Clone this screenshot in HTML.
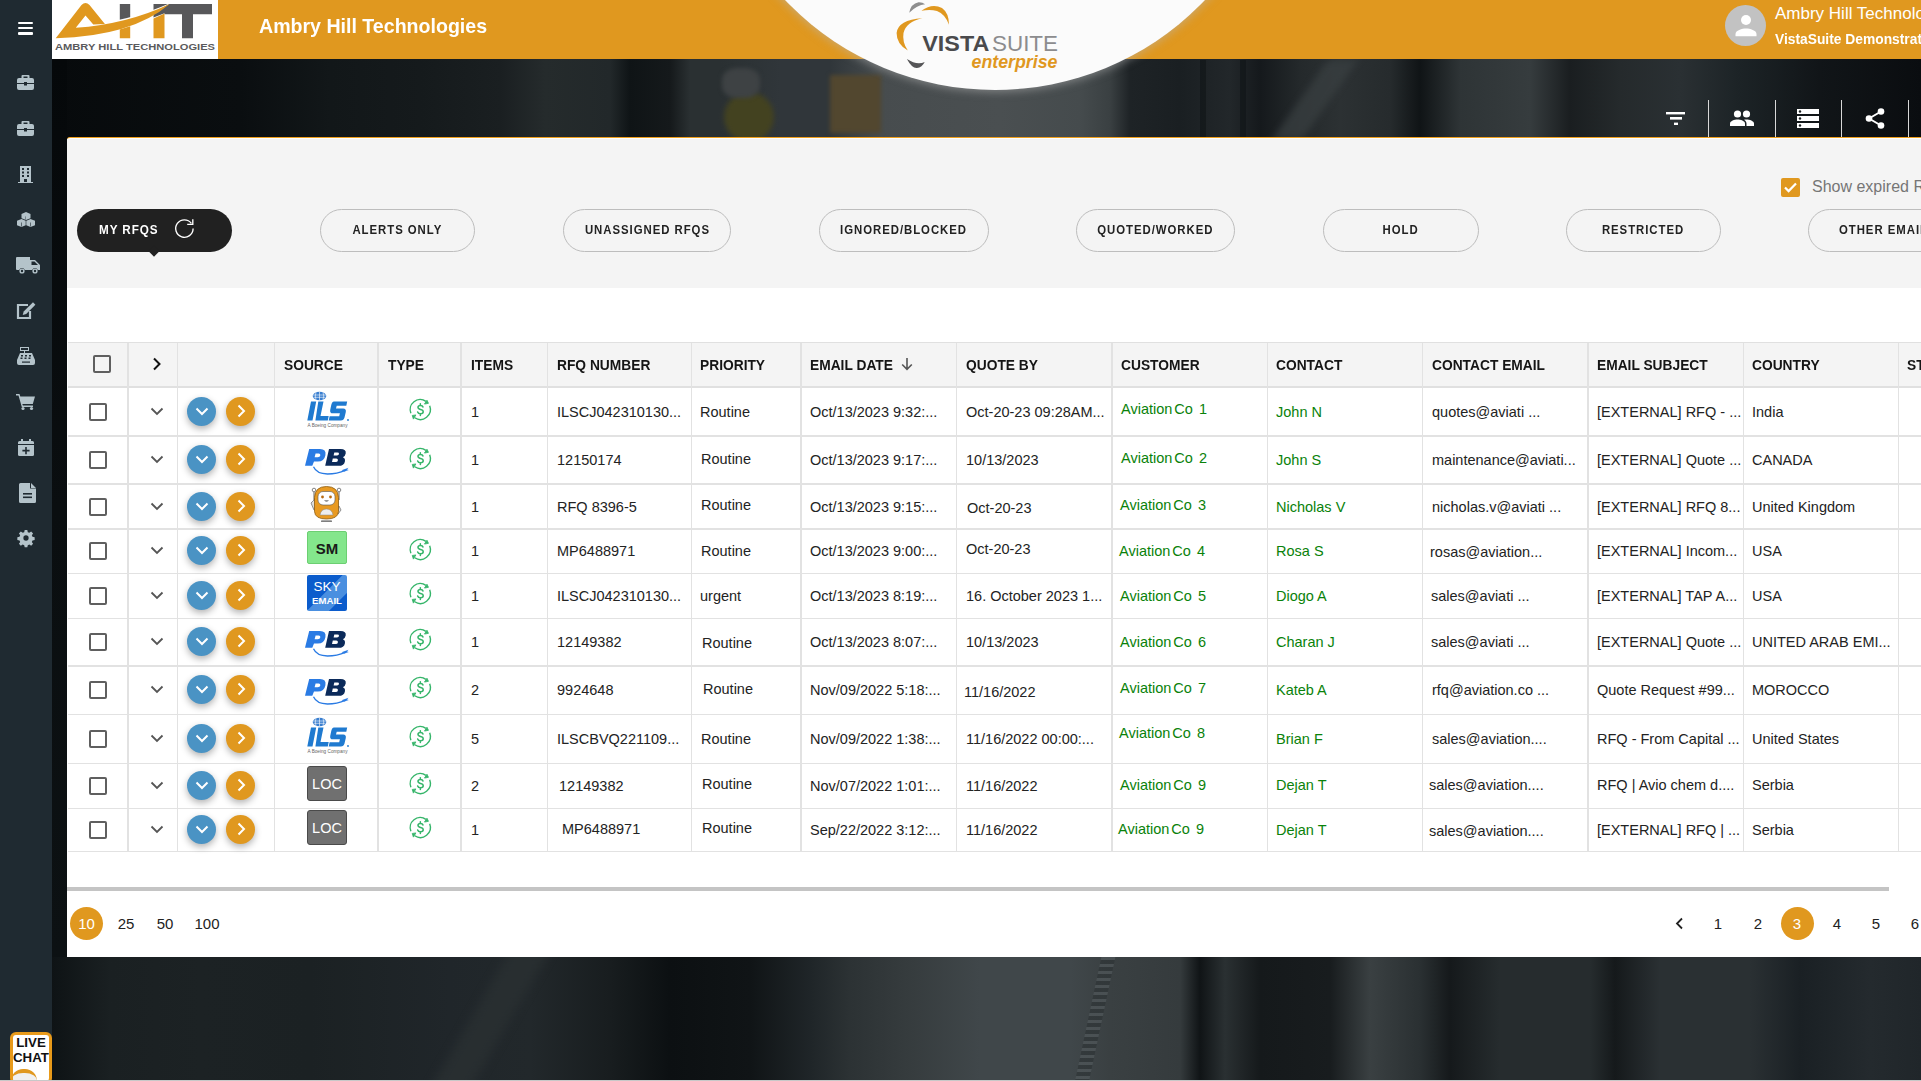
<!DOCTYPE html>
<html><head><meta charset="utf-8"><title>VistaSuite</title>
<style>
*{box-sizing:border-box;margin:0;padding:0}
html,body{width:1921px;height:1081px;overflow:hidden}
body{position:relative;font-family:"Liberation Sans",sans-serif;background:#14191b;color:#212121}
.a{position:absolute}
.t{position:absolute;white-space:nowrap;line-height:1}
svg{position:absolute;overflow:visible}
.ic{fill:#b4c3ca}
.pill{position:absolute;top:209px;height:43px;border:1px solid #bdbdbd;border-radius:22px;font-size:13px;font-weight:bold;letter-spacing:1.1px;color:#222;display:flex;align-items:center;justify-content:center}
.hd{position:absolute;top:357.8px;font-size:14.5px;font-weight:bold;color:#151515;white-space:nowrap;line-height:14px}
.c{position:absolute;font-size:14.5px;color:#232323;white-space:nowrap;line-height:14px}
.g{color:#0a820a}
</style></head>
<body>
<div class="a" style="left:52px;top:0;width:1869px;height:1081px;background:#12181a"></div>
<div class="a" style="left:52px;top:59px;width:1869px;height:80px;background:linear-gradient(90deg,#070a0c 0px,#0a0e10 188px,#121719 278px,#151a1c 368px,#1a1f21 448px,#252b2c 493px,#22282a 558px,#0f1416 578px,#15191b 618px,#2a3032 638px,#2a3032 668px,#30363a 728px,#30363a 778px,#474c4e 828px,#4a4f51 948px,#454b4d 1028px,#3a4042 1058px,#1e2326 1078px,#1a1f22 1128px,#22272a 1178px,#15191c 1208px,#24292b 1248px,#2c3133 1288px,#262b2d 1338px,#101416 1368px,#2e3436 1408px,#363c3e 1478px,#1a1e20 1518px,#252a2c 1568px,#2a3033 1628px,#1c2326 1688px,#111518 1768px,#0a0d10 1869px)"></div>
<div class="a" style="left:724px;top:92px;width:50px;height:50px;border-radius:50%;background:#434220;filter:blur(2.5px);transform:rotate(20deg)"></div>
<div class="a" style="left:722px;top:68px;width:38px;height:30px;border-radius:40%;background:#3e4244;filter:blur(2px)"></div>
<div class="a" style="left:830px;top:75px;width:51px;height:58px;background:#52472f;filter:blur(2px)"></div>
<div class="a" style="left:52px;top:956px;width:1869px;height:125px;background:linear-gradient(90deg,#0e1315 0px,#1a2022 58px,#1c2224 148px,#1b2123 258px,#20262a 398px,#22282b 478px,#181d1f 558px,#0c1012 618px,#101416 698px,#1f2528 758px,#2c3234 798px,#363c3e 858px,#40474a 928px,#40474a 1018px,#3a4042 1058px,#353b3d 1128px,#101416 1148px,#2a3032 1173px,#15191b 1208px,#181c1e 1278px,#3a4042 1318px,#2a3032 1368px,#15191b 1398px,#262c2e 1448px,#262c2e 1538px,#15191b 1563px,#2a3033 1608px,#2a3033 1698px,#1a2024 1748px,#242a2e 1818px,#20262a 1869px)"></div>
<div class="a" style="left:0;top:0;width:1921px;height:1081px;overflow:hidden;pointer-events:none"><div class="a" style="left:470px;top:940px;width:40px;height:160px;background:#2a3032;filter:blur(6px);transform:skewX(-30deg);opacity:.8"></div><div class="a" style="left:1088px;top:950px;width:14px;height:140px;background:repeating-linear-gradient(180deg,#50575a 0 3px,#2e3436 3px 7px);transform:skewX(-12deg);opacity:.7"></div><div class="a" style="left:1300px;top:60px;width:30px;height:80px;background:#3a4042;filter:blur(4px);transform:skewX(-35deg);opacity:.7"></div><div class="a" style="left:1200px;top:60px;width:6px;height:78px;background:#0c1012;opacity:.45"></div><div class="a" style="left:1240px;top:60px;width:6px;height:78px;background:#0c1012;opacity:.45"></div></div>
<div class="a" style="left:52px;top:59px;width:15px;height:898px;background:linear-gradient(180deg,#05080a,#0a0e10 50%,#0c1113)"></div>
<div class="a" style="left:0;top:0;width:52px;height:1081px;background:#1f2a31"></div>
<div class="a" style="left:18px;top:21.8px;width:15px;height:2.4px;background:#fff;border-radius:1px"></div>
<div class="a" style="left:18px;top:26.8px;width:15px;height:2.4px;background:#fff;border-radius:1px"></div>
<div class="a" style="left:18px;top:32.2px;width:15px;height:2.4px;background:#fff;border-radius:1px"></div>
<svg class="ic" style="left:17px;top:75px" width="17" height="15" viewBox="0 0 17 15"><path d="M5.5 0h6a1 1 0 0 1 1 1v2h2.5a2 2 0 0 1 2 2v3H10v-1H7v1H0V5a2 2 0 0 1 2-2h2.5V1a1 1 0 0 1 1-1zM6.5 1.5v1.5h4V1.5z"/><path d="M0 9h7v1.5h3V9h7v4a2 2 0 0 1-2 2H2a2 2 0 0 1-2-2z"/></svg>
<svg class="ic" style="left:17px;top:121px" width="17" height="15" viewBox="0 0 17 15"><path d="M5.5 0h6a1 1 0 0 1 1 1v2h2.5a2 2 0 0 1 2 2v3H10v-1H7v1H0V5a2 2 0 0 1 2-2h2.5V1a1 1 0 0 1 1-1zM6.5 1.5v1.5h4V1.5z"/><path d="M0 9h7v1.5h3V9h7v4a2 2 0 0 1-2 2H2a2 2 0 0 1-2-2z"/></svg>
<svg class="ic" style="left:18px;top:166px" width="15" height="17" viewBox="0 0 15 17"><path d="M2 0h11v16H9v-3H6v3H2z M0 16h15v1H0z"/><g fill="#1f2a31"><rect x="4" y="2" width="2" height="2"/><rect x="9" y="2" width="2" height="2"/><rect x="4" y="5.5" width="2" height="2"/><rect x="9" y="5.5" width="2" height="2"/><rect x="4" y="9" width="2" height="2"/><rect x="9" y="9" width="2" height="2"/></g></svg>
<svg class="ic" style="left:17px;top:212px" width="18" height="15" viewBox="0 0 18 15"><path d="M9 0l4.5 2v4.2L9 8 4.5 6.2V2z"/><path d="M4.5 7l4.2 1.8v4.4L4.5 15 0 13.2V8.8z"/><path d="M13.5 7l4.5 1.8v4.4L13.5 15 9.3 13.2V8.8z"/><g fill="#1f2a31"><path d="M9 4.5v3.2l-.4-.2V4.3z" /><rect x="4.2" y="10.5" width=".6" height="4"/><rect x="13.2" y="10.5" width=".6" height="4"/></g></svg>
<svg class="ic" style="left:16px;top:257px" width="24" height="17" viewBox="0 0 24 17"><path d="M0 1a1 1 0 0 1 1-1h13v3h5l5 5v5h-2.2a3 3 0 0 0-5.6 0H8.8a3 3 0 0 0-5.6 0H1a1 1 0 0 1-1-1z"/><circle cx="6" cy="14" r="2.6"/><circle cx="19" cy="14" r="2.6"/><path fill="#1f2a31" d="M15.5 4.5h3l3.5 3.5h-6.5z"/><circle cx="6" cy="14" r="1.2" fill="#1f2a31"/><circle cx="19" cy="14" r="1.2" fill="#1f2a31"/></svg>
<svg style="left:16px;top:302px" width="20" height="17" viewBox="0 0 20 17"><path d="M12 3H2v13h12V9" fill="none" stroke="#b4c3ca" stroke-width="2.2"/><path class="ic" d="M17 0.3l2.4 2.4-9.2 9.2-3.5 1 1-3.5z"/></svg>
<svg class="ic" style="left:17px;top:347px" width="18" height="18" viewBox="0 0 18 18"><path d="M3 0h9v4H8v2h7l3 7v3a2 2 0 0 1-2 2H2a2 2 0 0 1-2-2v-3l3-7h4V4H3z"/><g fill="#1f2a31"><rect x="4" y="1" width="7" height="2"/><rect x="4" y="8" width="2" height="1.5"/><rect x="8" y="8" width="2" height="1.5"/><rect x="12" y="8" width="2" height="1.5"/><rect x="3.5" y="10.5" width="2" height="1.5"/><rect x="7.5" y="10.5" width="2" height="1.5"/><rect x="11.5" y="10.5" width="2" height="1.5"/><rect x="5" y="14.5" width="8" height="1.2"/></g></svg>
<svg class="ic" style="left:16px;top:394px" width="19" height="16" viewBox="0 0 19 16"><path d="M0 0h3.5l.8 2.5H19l-2.2 7.5H6.3l.6 1.5H17v1.5H5.8L2.5 1.5H0z"/><circle cx="7" cy="14.5" r="1.6"/><circle cx="15.5" cy="14.5" r="1.6"/></svg>
<svg class="ic" style="left:18px;top:439px" width="16" height="17" viewBox="0 0 16 17"><path d="M3 0h2v2h6V0h2v2h1.5A1.5 1.5 0 0 1 16 3.5V5H0V3.5A1.5 1.5 0 0 1 1.5 2H3z"/><path d="M0 6h16v9.5a1.5 1.5 0 0 1-1.5 1.5h-13A1.5 1.5 0 0 1 0 15.5z"/><path fill="#1f2a31" d="M7.2 8h1.6v2.8h2.8v1.6H8.8v2.8H7.2v-2.8H4.4v-1.6h2.8z"/></svg>
<svg class="ic" style="left:19px;top:483px" width="17" height="20" viewBox="0 0 17 20"><path d="M1.5 0H11v5.5h6V18.5A1.5 1.5 0 0 1 15.5 20h-14A1.5 1.5 0 0 1 0 18.5V1.5A1.5 1.5 0 0 1 1.5 0zM12 0l5 5h-5z"/><g fill="#1f2a31"><rect x="4" y="10" width="9" height="1.6"/><rect x="4" y="13.5" width="9" height="1.6"/></g></svg>
<svg class="ic" style="left:17.7px;top:530.3px" width="16" height="16" viewBox="-8.5 -8.5 17 17"><path d="M-1.4-8.5h2.8l.5 2.3 1.6.7 2-1.3 2 2-1.3 2 .7 1.6 2.3.5v2.8l-2.3.5-.7 1.6 1.3 2-2 2-2-1.3-1.6.7-.5 2.3h-2.8l-.5-2.3-1.6-.7-2 1.3-2-2 1.3-2-.7-1.6-2.3-.5v-2.8l2.3-.5.7-1.6-1.3-2 2-2 2 1.3 1.6-.7z"/><circle r="2.8" fill="#1f2a31"/></svg>
<div class="a" style="left:10px;top:1032px;width:42px;height:52px;border:3px solid #e89a1a;border-radius:6px;background:#fff;overflow:hidden"><div class="t" style="left:0;width:36px;top:1.2px;text-align:center;font-size:13.3px;font-weight:bold;color:#111;line-height:14.5px">LIVE<br>CHAT</div><div class="a" style="left:-2px;top:34px;width:26px;height:20px;border-radius:12px 12px 0 0;background:#f0f0f0;border-top:4px solid #e0981f"></div></div>
<div class="a" style="left:0;top:1080px;width:1921px;height:1px;background:#c8c8c8"></div>
<div class="a" style="left:52px;top:0;width:1869px;height:59px;background:#e0981f"></div>
<div class="a" style="left:52px;top:0;width:165.8px;height:59px;background:#fff"></div>
<svg style="left:52px;top:0" width="165" height="59" viewBox="0 0 165 59">
<path fill="#58585a" d="M67.8 3.9h10.4V20.5l-10.4 3z M101.5 3.9H160v10.3H141V38.2H130V14.2H112.5v-1l-11 4.2z"/>
<path fill="#e0981f" d="M67.8 29.5l10.4-3.2V38.2H67.8z M101.5 18.5l11-5V38.2h-11z"/>
<path fill="#fff" d="M23.8 26.3 Q75 22.5 119.5 2.5 Q82 28 22 30z"/>
<path fill="#e0981f" d="M3.7 38.2 L29.5 5 Q33.5 1 37.5 5 L52.9 24 L41.3 24.6 L33.5 15.5 L23.8 27.8 Q75 24 117.7 3.9 Q80 36 3.7 38.2 Z"/>
<text x="3" y="50.4" font-family="Liberation Sans" font-weight="bold" font-size="9.3" fill="#5a5a5c" textLength="160" lengthAdjust="spacingAndGlyphs">AMBRY HILL TECHNOLOGIES</text>
</svg>
<div class="t" style="left:259px;top:15.8px;font-size:20.5px;font-weight:bold;color:#fff;transform:scaleX(.955);transform-origin:0 0">Ambry Hill Technologies</div>
<div class="a" style="left:705px;top:-490px;width:580px;height:580px;border-radius:50%;background:#fbfbfb;box-shadow:0 0 8px 2px rgba(185,185,185,.5)"></div>
<svg style="left:890px;top:0" width="175" height="75" viewBox="0 0 175 75">
<path fill="#e0981f" d="M32.3 18.3 Q8 20 6.6 33 Q6.5 44 17.8 50.6 Q12 42 13.5 33 Q16 22 32.3 18.3z"/>
<path fill="#e0981f" d="M31.4 10.8 Q42 3 52 8 Q59 13 59 24.8 Q55 14 47 11 Q40 9 31.4 10.8z"/>
<path fill="#8e8e8e" d="M19.2 12.7 Q21 3.5 28.5 2.2 Q32.5 2 35.1 4.2 Q27 5 19.2 12.7z"/>
<path fill="#555557" d="M16.9 59 Q22 68.5 27 68 Q32 67.5 34.7 61.9 Q27 65.5 16.9 59z"/>
<text x="32.3" y="50.6" font-family="Liberation Sans" font-weight="bold" font-size="22" fill="#4a4a4c" textLength="67" lengthAdjust="spacingAndGlyphs">VISTA</text>
<text x="102" y="50.6" font-family="Liberation Sans" font-size="22" fill="#8c8c8e" textLength="66" lengthAdjust="spacingAndGlyphs">SUITE</text>
<text x="81.5" y="68.2" font-family="Liberation Sans" font-weight="bold" font-style="italic" font-size="19" fill="#e0981f" textLength="86" lengthAdjust="spacingAndGlyphs">enterprise</text>
</svg>
<div class="a" style="left:1725px;top:5px;width:41px;height:41px;border-radius:50%;background:#c2c2c2"></div>
<svg style="left:1735px;top:14px" width="22" height="23" viewBox="0 0 22 23"><circle cx="11" cy="6" r="5" fill="#fff"/><path fill="#fff" d="M0.5 22.3v-2.3c0-3.8 6.5-5.6 10.5-5.6s10.5 1.8 10.5 5.6v2.3z"/></svg>
<div class="t" style="left:1775px;top:5px;font-size:17px;color:#fff">Ambry Hill Technologies</div>
<div class="t" style="left:1775px;top:31px;font-size:15px;font-weight:bold;color:#fff;transform:scaleX(.92);transform-origin:0 0">VistaSuite Demonstration</div>
<div class="a" style="left:1708px;top:100px;width:1.3px;height:37px;background:#d8d8d8"></div>
<div class="a" style="left:1775px;top:100px;width:1.3px;height:37px;background:#d8d8d8"></div>
<div class="a" style="left:1841px;top:100px;width:1.3px;height:37px;background:#d8d8d8"></div>
<div class="a" style="left:1908px;top:100px;width:1.3px;height:37px;background:#d8d8d8"></div>
<svg style="left:1666px;top:112px" width="20" height="14" viewBox="0 0 20 14" fill="#fff"><rect x="0" y="0" width="19" height="2.4"/><rect x="4" y="5" width="12" height="2.6"/><rect x="8" y="10.6" width="4" height="2.4"/></svg>
<svg style="left:1730px;top:108px" width="24" height="20" viewBox="0 0 24 20" fill="#fff"><circle cx="7.5" cy="6" r="3.6"/><circle cx="16.5" cy="6" r="3.6"/><path d="M0 18v-2.5c0-2.5 4.5-4 7.5-4s7.5 1.5 7.5 4V18z"/><path d="M14 11.8c.7-.1 1.6-.3 2.5-.3 3 0 7.5 1.5 7.5 4V18h-7.5v-2.5c0-1.5-.8-2.7-2.5-3.7z"/></svg>
<svg style="left:1797px;top:109px" width="22" height="19" viewBox="0 0 22 19" fill="#fff"><path d="M0 0h22v5H0z M0 7h22v5H0z M0 14h22v5H0z"/><g fill="#1a1f22"><circle cx="3" cy="2.5" r="1.2"/><circle cx="3" cy="9.5" r="1.2"/><circle cx="3" cy="16.5" r="1.2"/></g></svg>
<svg style="left:1865px;top:108px" width="20" height="21" viewBox="0 0 20 21" fill="#fff"><circle cx="16" cy="3.5" r="3.3"/><circle cx="4" cy="10.5" r="3.3"/><circle cx="16" cy="17.5" r="3.3"/><path d="M4 10.5L16 3.5M4 10.5L16 17.5" stroke="#fff" stroke-width="2"/></svg>
<div class="a" style="left:67px;top:137px;width:1860px;height:820px;background:#fff;border-radius:3px 0 0 0;border-top:1.6px solid #f0a01c"></div>
<div class="a" style="left:67px;top:139px;width:1854px;height:149px;background:#f4f4f4"></div>
<div class="a" style="left:77px;top:209px;width:155px;height:43px;border-radius:22px;background:#212121"></div>
<div class="a" style="left:150px;top:247px;width:8px;height:8px;background:#212121;transform:rotate(45deg)"></div>
<div class="t" style="left:99px;top:223px;font-size:13px;font-weight:bold;letter-spacing:1px;color:#fff;transform:scaleX(.9);transform-origin:0 0">MY RFQS</div>
<svg style="left:174px;top:219px" width="21" height="20" viewBox="0 0 21 20"><path d="M19.1 9.6A8.7 8.7 0 1 1 17.4 4.4" fill="none" stroke="#fff" stroke-width="1.35"/><path d="M13.2 5.4H18.8V0.3" fill="none" stroke="#fff" stroke-width="1.35"/></svg>
<div class="pill" style="left:320px;width:155px"><span style="display:inline-block;transform:scaleX(.875);margin-top:-2px">ALERTS ONLY</span></div>
<div class="pill" style="left:563px;width:168px"><span style="display:inline-block;transform:scaleX(.875);margin-top:-2px">UNASSIGNED RFQS</span></div>
<div class="pill" style="left:819px;width:170px"><span style="display:inline-block;transform:scaleX(.875);margin-top:-2px">IGNORED/BLOCKED</span></div>
<div class="pill" style="left:1076px;width:159px"><span style="display:inline-block;transform:scaleX(.875);margin-top:-2px">QUOTED/WORKED</span></div>
<div class="pill" style="left:1323px;width:156px"><span style="display:inline-block;transform:scaleX(.875);margin-top:-2px">HOLD</span></div>
<div class="pill" style="left:1566px;width:155px"><span style="display:inline-block;transform:scaleX(.875);margin-top:-2px">RESTRICTED</span></div>
<div class="pill" style="left:1808px;width:160px"><span style="display:inline-block;transform:scaleX(.875);margin-top:-2px">OTHER EMAILS</span></div>
<div class="a" style="left:1781px;top:178px;width:19px;height:19px;border-radius:2px;background:#e0981f"></div>
<svg style="left:1783px;top:181px" width="15" height="13" viewBox="0 0 15 13"><path d="M2 6.5l3.6 3.6L13 2.5" fill="none" stroke="#fff" stroke-width="2.2"/></svg>
<div class="t" style="left:1812px;top:179px;font-size:16px;color:#767676">Show expired RFQs</div>
<div class="a" style="left:68px;top:342px;width:1853px;height:46px;background:#f4f4f4;border-top:1px solid #e0e0e0;border-bottom:2.5px solid #e0e0e0"></div>
<div class="a" style="left:68px;top:435.25px;width:1853px;height:1.5px;background:#e2e2e2"></div>
<div class="a" style="left:68px;top:483.25px;width:1853px;height:1.5px;background:#e2e2e2"></div>
<div class="a" style="left:68px;top:528.05px;width:1853px;height:1.5px;background:#e2e2e2"></div>
<div class="a" style="left:68px;top:572.55px;width:1853px;height:1.5px;background:#e2e2e2"></div>
<div class="a" style="left:68px;top:617.55px;width:1853px;height:1.5px;background:#e2e2e2"></div>
<div class="a" style="left:68px;top:665.45px;width:1853px;height:1.5px;background:#e2e2e2"></div>
<div class="a" style="left:68px;top:713.75px;width:1853px;height:1.5px;background:#e2e2e2"></div>
<div class="a" style="left:68px;top:762.65px;width:1853px;height:1.5px;background:#e2e2e2"></div>
<div class="a" style="left:68px;top:807.65px;width:1853px;height:1.5px;background:#e2e2e2"></div>
<div class="a" style="left:68px;top:850.75px;width:1853px;height:1.5px;background:#e2e2e2"></div>
<div class="a" style="left:127.05px;top:343px;width:1.5px;height:508px;background:#e2e2e2"></div>
<div class="a" style="left:176.85px;top:343px;width:1.5px;height:508px;background:#e2e2e2"></div>
<div class="a" style="left:273.55px;top:343px;width:1.5px;height:508px;background:#e2e2e2"></div>
<div class="a" style="left:377.35px;top:343px;width:1.5px;height:508px;background:#e2e2e2"></div>
<div class="a" style="left:460.25px;top:343px;width:1.5px;height:508px;background:#e2e2e2"></div>
<div class="a" style="left:546.55px;top:343px;width:1.5px;height:508px;background:#e2e2e2"></div>
<div class="a" style="left:690.55px;top:343px;width:1.5px;height:508px;background:#e2e2e2"></div>
<div class="a" style="left:800.25px;top:343px;width:1.5px;height:508px;background:#e2e2e2"></div>
<div class="a" style="left:955.85px;top:343px;width:1.5px;height:508px;background:#e2e2e2"></div>
<div class="a" style="left:1111.05px;top:343px;width:1.5px;height:508px;background:#e2e2e2"></div>
<div class="a" style="left:1266.75px;top:343px;width:1.5px;height:508px;background:#e2e2e2"></div>
<div class="a" style="left:1421.85px;top:343px;width:1.5px;height:508px;background:#e2e2e2"></div>
<div class="a" style="left:1587.15px;top:343px;width:1.5px;height:508px;background:#e2e2e2"></div>
<div class="a" style="left:1742.75px;top:343px;width:1.5px;height:508px;background:#e2e2e2"></div>
<div class="a" style="left:1897.55px;top:343px;width:1.5px;height:508px;background:#e2e2e2"></div>
<div class="a" style="left:93px;top:355px;width:18px;height:18px;border:2px solid #5f5f5f;border-radius:2px"></div>
<svg style="left:152px;top:357px" width="10" height="14" viewBox="0 0 10 14"><path d="M2 1.5l5.5 5.5L2 12.5" fill="none" stroke="#111" stroke-width="2"/></svg>
<div class="hd" style="left:284px"><span style="display:inline-block;transform:scaleX(.95);transform-origin:0 0">SOURCE</span></div>
<div class="hd" style="left:388px"><span style="display:inline-block;transform:scaleX(.95);transform-origin:0 0">TYPE</span></div>
<div class="hd" style="left:471px"><span style="display:inline-block;transform:scaleX(.95);transform-origin:0 0">ITEMS</span></div>
<div class="hd" style="left:557px"><span style="display:inline-block;transform:scaleX(.95);transform-origin:0 0">RFQ NUMBER</span></div>
<div class="hd" style="left:700px"><span style="display:inline-block;transform:scaleX(.95);transform-origin:0 0">PRIORITY</span></div>
<div class="hd" style="left:810px"><span style="display:inline-block;transform:scaleX(.95);transform-origin:0 0">EMAIL DATE</span></div>
<div class="hd" style="left:966px"><span style="display:inline-block;transform:scaleX(.95);transform-origin:0 0">QUOTE BY</span></div>
<div class="hd" style="left:1121px"><span style="display:inline-block;transform:scaleX(.95);transform-origin:0 0">CUSTOMER</span></div>
<div class="hd" style="left:1276px"><span style="display:inline-block;transform:scaleX(.95);transform-origin:0 0">CONTACT</span></div>
<div class="hd" style="left:1432px"><span style="display:inline-block;transform:scaleX(.95);transform-origin:0 0">CONTACT EMAIL</span></div>
<div class="hd" style="left:1597px"><span style="display:inline-block;transform:scaleX(.95);transform-origin:0 0">EMAIL SUBJECT</span></div>
<div class="hd" style="left:1752px"><span style="display:inline-block;transform:scaleX(.95);transform-origin:0 0">COUNTRY</span></div>
<div class="hd" style="left:1907px"><span style="display:inline-block;transform:scaleX(.95);transform-origin:0 0">STATUS</span></div>
<svg style="left:900px;top:357px" width="14" height="14" viewBox="0 0 14 14"><path d="M7 1v11.5M2.2 7.5L7 12.3l4.8-4.8" fill="none" stroke="#555" stroke-width="1.6"/></svg>
<div class="a" style="left:89px;top:403px;width:18px;height:18px;border:2px solid #5f5f5f;border-radius:2px"></div>
<svg style="left:150px;top:407px" width="14" height="9" viewBox="0 0 14 9"><path d="M1.5 1.5l5.5 5.5 5.5-5.5" fill="none" stroke="#555" stroke-width="1.8"/></svg>
<div class="a" style="left:186.8px;top:397.4px;width:29px;height:29px;border-radius:50%;background:#4a93c4;box-shadow:0 3px 7px rgba(0,0,0,.3)"></div>
<svg style="left:194.8px;top:407.4px" width="14" height="9" viewBox="0 0 14 9"><path d="M1.5 1.5l5.5 5.5 5.5-5.5" fill="none" stroke="#fff" stroke-width="2"/></svg>
<div class="a" style="left:225.8px;top:397.4px;width:29px;height:29px;border-radius:50%;background:#e0981f;box-shadow:0 3px 7px rgba(0,0,0,.3)"></div>
<svg style="left:236.8px;top:404.4px" width="9" height="14" viewBox="0 0 9 14"><path d="M1.5 1.5l5.5 5.5-5.5 5.5" fill="none" stroke="#fff" stroke-width="2"/></svg>
<svg style="left:306px;top:391px" width="44" height="37" viewBox="0 0 44 37"><ellipse cx="13.5" cy="5" rx="6.8" ry="4.3" fill="#3a7fd0"/><g stroke="#fff" stroke-width=".6" fill="none"><path d="M7 4h13M7.5 6.3h12M13.5 .8v8.4M10 1.3q-1.5 3.7 0 7.4M17 1.3q1.5 3.7 0 7.4"/></g><path fill="#1f7ad0" d="M5 10.5h5.2L6.5 29.5H1.3z M12.3 10.5h5.2l-3 14.5h8.2l-.9 4.5H9.4z"/><path fill="#1f7ad0" d="M27 10.5h14.2l-.9 4.3h-9.6l-.7 2.6h7.2q3.2.2 2.6 3.6l-1.3 5.6q-.8 2.9-3.6 2.9H22.7l.9-4.3h9.6l.7-2.9h-7.2q-3-.1-2.5-3.4l1-4.6q.7-3.8 2.8-3.8z"/><circle cx="42" cy="29" r=".9" fill="#1f7ad0"/><text x="21.5" y="36" text-anchor="middle" font-family="Liberation Sans" font-size="4.6" fill="#666" textLength="40" lengthAdjust="spacingAndGlyphs">A Boeing Company</text></svg>
<svg style="left:408.7px;top:397.5px" width="23" height="23" viewBox="0 0 22 22" fill="none" stroke="#36b56a" stroke-width="1.35"><path d="M1.8 14.6A9.6 9.6 0 0 1 16.2 3.2"/><path d="M19.8 7.5A9.6 9.6 0 0 1 5.5 18.9"/><path d="M17.2 2.1L18.6 5.1L14.8 5.8z" fill="#36b56a" stroke-width=".8" stroke-linejoin="round"/><path d="M3.1 16.7L6.6 16.2L4.2 20.2z" fill="#36b56a" stroke-width=".8" stroke-linejoin="round"/><path d="M13.4 8.6q-.4-1.4-2.5-1.4-2.3 0-2.3 1.7 0 1.5 2.4 2 2.6.5 2.6 2.3 0 1.9-2.6 1.9-2.2 0-2.7-1.7M10.85 5.6v1.6M10.85 15.1v1.6" stroke-width="1.45" stroke-linecap="round"/></svg>
<div class="c" style="left:471px;top:405px">1</div>
<div class="c" style="left:557px;top:405px">ILSCJ042310130...</div>
<div class="c" style="left:700px;top:405px">Routine</div>
<div class="c" style="left:810px;top:405px">Oct/13/2023 9:32:...</div>
<div class="c" style="left:966px;top:405px">Oct-20-23 09:28AM...</div>
<div class="c g" style="left:1121px;top:402px">Aviation<span style="margin-left:2px">Co</span><span style="margin-left:6px">1</span></div>
<div class="c g" style="left:1276px;top:405px">John N</div>
<div class="c" style="left:1432px;top:405px">quotes@aviati ...</div>
<div class="c" style="left:1597px;top:405px">[EXTERNAL] RFQ - ...</div>
<div class="c" style="left:1752px;top:405px">India</div>
<div class="a" style="left:89px;top:451px;width:18px;height:18px;border:2px solid #5f5f5f;border-radius:2px"></div>
<svg style="left:150px;top:455px" width="14" height="9" viewBox="0 0 14 9"><path d="M1.5 1.5l5.5 5.5 5.5-5.5" fill="none" stroke="#555" stroke-width="1.8"/></svg>
<div class="a" style="left:186.8px;top:445.4px;width:29px;height:29px;border-radius:50%;background:#4a93c4;box-shadow:0 3px 7px rgba(0,0,0,.3)"></div>
<svg style="left:194.8px;top:455.4px" width="14" height="9" viewBox="0 0 14 9"><path d="M1.5 1.5l5.5 5.5 5.5-5.5" fill="none" stroke="#fff" stroke-width="2"/></svg>
<div class="a" style="left:225.8px;top:445.4px;width:29px;height:29px;border-radius:50%;background:#e0981f;box-shadow:0 3px 7px rgba(0,0,0,.3)"></div>
<svg style="left:236.8px;top:452.4px" width="9" height="14" viewBox="0 0 9 14"><path d="M1.5 1.5l5.5 5.5-5.5 5.5" fill="none" stroke="#fff" stroke-width="2"/></svg>
<svg style="left:305px;top:449px" width="45" height="28" viewBox="0 0 45 28"><path fill="#2a7be4" d="M4.2 0h10.8q6.5 0 5.4 6.2-1.2 6.3-7.5 6.3H9l-1.7 4.3H0z M10.6 4.6l-1 3.6h3.2q2.2 0 2.5-1.8.3-1.8-1.6-1.8z"/><path fill="#0b2a5a" d="M24 0h11.5q6 .2 5.2 4.4-.5 2.8-2.8 3.8 2.6 1 2 4.2-.8 4.5-6.6 4.4H20.2z M29.3 3.6l-.7 2.8h3.4q1.8 0 2-1.4.2-1.4-1.6-1.4z M27.8 9.6l-.8 3.5h3.7q1.9 0 2.2-1.7.3-1.8-1.6-1.8z"/><path d="M8.5 17.8q3 7 14 7.2 9.5 0 18-3.6" fill="none" stroke="#2a7be4" stroke-width="1.3"/><path fill="#2a7be4" d="M36.5 21.2l7-2.4-1.5 1.8 1.8.3-4.5 1.7z"/></svg>
<svg style="left:408.7px;top:446.5px" width="23" height="23" viewBox="0 0 22 22" fill="none" stroke="#36b56a" stroke-width="1.35"><path d="M1.8 14.6A9.6 9.6 0 0 1 16.2 3.2"/><path d="M19.8 7.5A9.6 9.6 0 0 1 5.5 18.9"/><path d="M17.2 2.1L18.6 5.1L14.8 5.8z" fill="#36b56a" stroke-width=".8" stroke-linejoin="round"/><path d="M3.1 16.7L6.6 16.2L4.2 20.2z" fill="#36b56a" stroke-width=".8" stroke-linejoin="round"/><path d="M13.4 8.6q-.4-1.4-2.5-1.4-2.3 0-2.3 1.7 0 1.5 2.4 2 2.6.5 2.6 2.3 0 1.9-2.6 1.9-2.2 0-2.7-1.7M10.85 5.6v1.6M10.85 15.1v1.6" stroke-width="1.45" stroke-linecap="round"/></svg>
<div class="c" style="left:471px;top:453px">1</div>
<div class="c" style="left:557px;top:453px">12150174</div>
<div class="c" style="left:701px;top:452px">Routine</div>
<div class="c" style="left:810px;top:453px">Oct/13/2023 9:17:...</div>
<div class="c" style="left:966px;top:453px">10/13/2023</div>
<div class="c g" style="left:1121px;top:451px">Aviation<span style="margin-left:2px">Co</span><span style="margin-left:6px">2</span></div>
<div class="c g" style="left:1276px;top:453px">John S</div>
<div class="c" style="left:1432px;top:453px">maintenance@aviati...</div>
<div class="c" style="left:1597px;top:453px">[EXTERNAL] Quote ...</div>
<div class="c" style="left:1752px;top:453px">CANADA</div>
<div class="a" style="left:89px;top:498px;width:18px;height:18px;border:2px solid #5f5f5f;border-radius:2px"></div>
<svg style="left:150px;top:502px" width="14" height="9" viewBox="0 0 14 9"><path d="M1.5 1.5l5.5 5.5 5.5-5.5" fill="none" stroke="#555" stroke-width="1.8"/></svg>
<div class="a" style="left:186.8px;top:492.4px;width:29px;height:29px;border-radius:50%;background:#4a93c4;box-shadow:0 3px 7px rgba(0,0,0,.3)"></div>
<svg style="left:194.8px;top:502.4px" width="14" height="9" viewBox="0 0 14 9"><path d="M1.5 1.5l5.5 5.5 5.5-5.5" fill="none" stroke="#fff" stroke-width="2"/></svg>
<div class="a" style="left:225.8px;top:492.4px;width:29px;height:29px;border-radius:50%;background:#e0981f;box-shadow:0 3px 7px rgba(0,0,0,.3)"></div>
<svg style="left:236.8px;top:499.4px" width="9" height="14" viewBox="0 0 9 14"><path d="M1.5 1.5l5.5 5.5-5.5 5.5" fill="none" stroke="#fff" stroke-width="2"/></svg>
<svg style="left:308px;top:486px" width="37" height="36" viewBox="0 0 37 36"><path fill="#ddd" stroke="#777" stroke-width=".8" d="M3 17l4-4 2 8-3 3z"/><path fill="#ddd" stroke="#777" stroke-width=".8" d="M31 20l2 4-3 4-2-6z"/><circle cx="6" cy="4" r="1.8" fill="#fff" stroke="#666" stroke-width=".8"/><circle cx="31" cy="4" r="1.8" fill="#fff" stroke="#666" stroke-width=".8"/><path d="M6 6v8M31 6v8" stroke="#666" stroke-width="1"/><path fill="#e89a22" stroke="#8a5a10" stroke-width=".8" d="M18.5 .5q11.5 0 12 11v14q-.5 7.5-12 7.5T6.5 25.5v-14q.5-11 12-11z"/><rect x="10" y="5.5" width="17" height="13.5" rx="5" fill="#fff" stroke="#555" stroke-width=".6"/><circle cx="14.5" cy="11" r="1.4" fill="#b96a10"/><circle cx="22.5" cy="11" r="1.4" fill="#b96a10"/><path d="M16 14.5q2.5 2 5 0z" fill="#333"/><path fill="#eee" stroke="#888" stroke-width=".5" d="M12 29q1-6 6.5-6t6.5 6z"/><rect x="13" y="34.5" width="11" height="1.3" rx=".6" fill="#555"/></svg>
<div class="c" style="left:471px;top:500px">1</div>
<div class="c" style="left:557px;top:500px">RFQ 8396-5</div>
<div class="c" style="left:701px;top:498px">Routine</div>
<div class="c" style="left:810px;top:500px">Oct/13/2023 9:15:...</div>
<div class="c" style="left:967px;top:501px">Oct-20-23</div>
<div class="c g" style="left:1120px;top:498px">Aviation<span style="margin-left:2px">Co</span><span style="margin-left:6px">3</span></div>
<div class="c g" style="left:1276px;top:500px">Nicholas V</div>
<div class="c" style="left:1432px;top:500px">nicholas.v@aviati ...</div>
<div class="c" style="left:1597px;top:500px">[EXTERNAL] RFQ 8...</div>
<div class="c" style="left:1752px;top:500px">United Kingdom</div>
<div class="a" style="left:89px;top:542px;width:18px;height:18px;border:2px solid #5f5f5f;border-radius:2px"></div>
<svg style="left:150px;top:546px" width="14" height="9" viewBox="0 0 14 9"><path d="M1.5 1.5l5.5 5.5 5.5-5.5" fill="none" stroke="#555" stroke-width="1.8"/></svg>
<div class="a" style="left:186.8px;top:536.4px;width:29px;height:29px;border-radius:50%;background:#4a93c4;box-shadow:0 3px 7px rgba(0,0,0,.3)"></div>
<svg style="left:194.8px;top:546.4px" width="14" height="9" viewBox="0 0 14 9"><path d="M1.5 1.5l5.5 5.5 5.5-5.5" fill="none" stroke="#fff" stroke-width="2"/></svg>
<div class="a" style="left:225.8px;top:536.4px;width:29px;height:29px;border-radius:50%;background:#e0981f;box-shadow:0 3px 7px rgba(0,0,0,.3)"></div>
<svg style="left:236.8px;top:543.4px" width="9" height="14" viewBox="0 0 9 14"><path d="M1.5 1.5l5.5 5.5-5.5 5.5" fill="none" stroke="#fff" stroke-width="2"/></svg>
<div class="a" style="left:307px;top:531px;width:40px;height:33px;background:#84e68c;border-radius:2px;border:1px solid #6ccf72"></div><div class="t" style="left:307px;top:541px;width:40px;text-align:center;font-size:15px;font-weight:bold;color:#1a1a1a">SM</div>
<svg style="left:408.7px;top:537.5px" width="23" height="23" viewBox="0 0 22 22" fill="none" stroke="#36b56a" stroke-width="1.35"><path d="M1.8 14.6A9.6 9.6 0 0 1 16.2 3.2"/><path d="M19.8 7.5A9.6 9.6 0 0 1 5.5 18.9"/><path d="M17.2 2.1L18.6 5.1L14.8 5.8z" fill="#36b56a" stroke-width=".8" stroke-linejoin="round"/><path d="M3.1 16.7L6.6 16.2L4.2 20.2z" fill="#36b56a" stroke-width=".8" stroke-linejoin="round"/><path d="M13.4 8.6q-.4-1.4-2.5-1.4-2.3 0-2.3 1.7 0 1.5 2.4 2 2.6.5 2.6 2.3 0 1.9-2.6 1.9-2.2 0-2.7-1.7M10.85 5.6v1.6M10.85 15.1v1.6" stroke-width="1.45" stroke-linecap="round"/></svg>
<div class="c" style="left:471px;top:544px">1</div>
<div class="c" style="left:557px;top:544px">MP6488971</div>
<div class="c" style="left:701px;top:544px">Routine</div>
<div class="c" style="left:810px;top:544px">Oct/13/2023 9:00:...</div>
<div class="c" style="left:966px;top:542px">Oct-20-23</div>
<div class="c g" style="left:1119px;top:544px">Aviation<span style="margin-left:2px">Co</span><span style="margin-left:6px">4</span></div>
<div class="c g" style="left:1276px;top:544px">Rosa S</div>
<div class="c" style="left:1430px;top:545px">rosas@aviation...</div>
<div class="c" style="left:1597px;top:544px">[EXTERNAL] Incom...</div>
<div class="c" style="left:1752px;top:544px">USA</div>
<div class="a" style="left:89px;top:587px;width:18px;height:18px;border:2px solid #5f5f5f;border-radius:2px"></div>
<svg style="left:150px;top:591px" width="14" height="9" viewBox="0 0 14 9"><path d="M1.5 1.5l5.5 5.5 5.5-5.5" fill="none" stroke="#555" stroke-width="1.8"/></svg>
<div class="a" style="left:186.8px;top:581.4px;width:29px;height:29px;border-radius:50%;background:#4a93c4;box-shadow:0 3px 7px rgba(0,0,0,.3)"></div>
<svg style="left:194.8px;top:591.4px" width="14" height="9" viewBox="0 0 14 9"><path d="M1.5 1.5l5.5 5.5 5.5-5.5" fill="none" stroke="#fff" stroke-width="2"/></svg>
<div class="a" style="left:225.8px;top:581.4px;width:29px;height:29px;border-radius:50%;background:#e0981f;box-shadow:0 3px 7px rgba(0,0,0,.3)"></div>
<svg style="left:236.8px;top:588.4px" width="9" height="14" viewBox="0 0 9 14"><path d="M1.5 1.5l5.5 5.5-5.5 5.5" fill="none" stroke="#fff" stroke-width="2"/></svg>
<div class="a" style="left:307px;top:575px;width:40px;height:36px;background:linear-gradient(135deg,#0b5ccc 0%,#0b5ccc 47%,#4a8fe0 47.5%,#4a8fe0 76%,#0b5ccc 76.5%);border-radius:2px"></div><div class="t" style="left:307px;top:580px;width:40px;text-align:center;font-size:13.5px;color:#fff;line-height:1">SKY</div><div class="t" style="left:307px;top:596px;width:40px;text-align:center;font-size:9.6px;font-weight:bold;color:#fff;line-height:1">EMAIL</div>
<svg style="left:408.7px;top:581.5px" width="23" height="23" viewBox="0 0 22 22" fill="none" stroke="#36b56a" stroke-width="1.35"><path d="M1.8 14.6A9.6 9.6 0 0 1 16.2 3.2"/><path d="M19.8 7.5A9.6 9.6 0 0 1 5.5 18.9"/><path d="M17.2 2.1L18.6 5.1L14.8 5.8z" fill="#36b56a" stroke-width=".8" stroke-linejoin="round"/><path d="M3.1 16.7L6.6 16.2L4.2 20.2z" fill="#36b56a" stroke-width=".8" stroke-linejoin="round"/><path d="M13.4 8.6q-.4-1.4-2.5-1.4-2.3 0-2.3 1.7 0 1.5 2.4 2 2.6.5 2.6 2.3 0 1.9-2.6 1.9-2.2 0-2.7-1.7M10.85 5.6v1.6M10.85 15.1v1.6" stroke-width="1.45" stroke-linecap="round"/></svg>
<div class="c" style="left:471px;top:589px">1</div>
<div class="c" style="left:557px;top:589px">ILSCJ042310130...</div>
<div class="c" style="left:700px;top:589px">urgent</div>
<div class="c" style="left:810px;top:589px">Oct/13/2023 8:19:...</div>
<div class="c" style="left:966px;top:589px">16. October 2023 1...</div>
<div class="c g" style="left:1120px;top:589px">Aviation<span style="margin-left:2px">Co</span><span style="margin-left:6px">5</span></div>
<div class="c g" style="left:1276px;top:589px">Diogo A</div>
<div class="c" style="left:1431px;top:589px">sales@aviati ...</div>
<div class="c" style="left:1597px;top:589px">[EXTERNAL] TAP A...</div>
<div class="c" style="left:1752px;top:589px">USA</div>
<div class="a" style="left:89px;top:633px;width:18px;height:18px;border:2px solid #5f5f5f;border-radius:2px"></div>
<svg style="left:150px;top:637px" width="14" height="9" viewBox="0 0 14 9"><path d="M1.5 1.5l5.5 5.5 5.5-5.5" fill="none" stroke="#555" stroke-width="1.8"/></svg>
<div class="a" style="left:186.8px;top:627.4px;width:29px;height:29px;border-radius:50%;background:#4a93c4;box-shadow:0 3px 7px rgba(0,0,0,.3)"></div>
<svg style="left:194.8px;top:637.4px" width="14" height="9" viewBox="0 0 14 9"><path d="M1.5 1.5l5.5 5.5 5.5-5.5" fill="none" stroke="#fff" stroke-width="2"/></svg>
<div class="a" style="left:225.8px;top:627.4px;width:29px;height:29px;border-radius:50%;background:#e0981f;box-shadow:0 3px 7px rgba(0,0,0,.3)"></div>
<svg style="left:236.8px;top:634.4px" width="9" height="14" viewBox="0 0 9 14"><path d="M1.5 1.5l5.5 5.5-5.5 5.5" fill="none" stroke="#fff" stroke-width="2"/></svg>
<svg style="left:305px;top:631px" width="45" height="28" viewBox="0 0 45 28"><path fill="#2a7be4" d="M4.2 0h10.8q6.5 0 5.4 6.2-1.2 6.3-7.5 6.3H9l-1.7 4.3H0z M10.6 4.6l-1 3.6h3.2q2.2 0 2.5-1.8.3-1.8-1.6-1.8z"/><path fill="#0b2a5a" d="M24 0h11.5q6 .2 5.2 4.4-.5 2.8-2.8 3.8 2.6 1 2 4.2-.8 4.5-6.6 4.4H20.2z M29.3 3.6l-.7 2.8h3.4q1.8 0 2-1.4.2-1.4-1.6-1.4z M27.8 9.6l-.8 3.5h3.7q1.9 0 2.2-1.7.3-1.8-1.6-1.8z"/><path d="M8.5 17.8q3 7 14 7.2 9.5 0 18-3.6" fill="none" stroke="#2a7be4" stroke-width="1.3"/><path fill="#2a7be4" d="M36.5 21.2l7-2.4-1.5 1.8 1.8.3-4.5 1.7z"/></svg>
<svg style="left:408.7px;top:627.5px" width="23" height="23" viewBox="0 0 22 22" fill="none" stroke="#36b56a" stroke-width="1.35"><path d="M1.8 14.6A9.6 9.6 0 0 1 16.2 3.2"/><path d="M19.8 7.5A9.6 9.6 0 0 1 5.5 18.9"/><path d="M17.2 2.1L18.6 5.1L14.8 5.8z" fill="#36b56a" stroke-width=".8" stroke-linejoin="round"/><path d="M3.1 16.7L6.6 16.2L4.2 20.2z" fill="#36b56a" stroke-width=".8" stroke-linejoin="round"/><path d="M13.4 8.6q-.4-1.4-2.5-1.4-2.3 0-2.3 1.7 0 1.5 2.4 2 2.6.5 2.6 2.3 0 1.9-2.6 1.9-2.2 0-2.7-1.7M10.85 5.6v1.6M10.85 15.1v1.6" stroke-width="1.45" stroke-linecap="round"/></svg>
<div class="c" style="left:471px;top:635px">1</div>
<div class="c" style="left:557px;top:635px">12149382</div>
<div class="c" style="left:702px;top:636px">Routine</div>
<div class="c" style="left:810px;top:635px">Oct/13/2023 8:07:...</div>
<div class="c" style="left:966px;top:635px">10/13/2023</div>
<div class="c g" style="left:1120px;top:635px">Aviation<span style="margin-left:2px">Co</span><span style="margin-left:6px">6</span></div>
<div class="c g" style="left:1276px;top:635px">Charan J</div>
<div class="c" style="left:1431px;top:635px">sales@aviati ...</div>
<div class="c" style="left:1597px;top:635px">[EXTERNAL] Quote ...</div>
<div class="c" style="left:1752px;top:635px">UNITED ARAB EMI...</div>
<div class="a" style="left:89px;top:681px;width:18px;height:18px;border:2px solid #5f5f5f;border-radius:2px"></div>
<svg style="left:150px;top:685px" width="14" height="9" viewBox="0 0 14 9"><path d="M1.5 1.5l5.5 5.5 5.5-5.5" fill="none" stroke="#555" stroke-width="1.8"/></svg>
<div class="a" style="left:186.8px;top:675.4px;width:29px;height:29px;border-radius:50%;background:#4a93c4;box-shadow:0 3px 7px rgba(0,0,0,.3)"></div>
<svg style="left:194.8px;top:685.4px" width="14" height="9" viewBox="0 0 14 9"><path d="M1.5 1.5l5.5 5.5 5.5-5.5" fill="none" stroke="#fff" stroke-width="2"/></svg>
<div class="a" style="left:225.8px;top:675.4px;width:29px;height:29px;border-radius:50%;background:#e0981f;box-shadow:0 3px 7px rgba(0,0,0,.3)"></div>
<svg style="left:236.8px;top:682.4px" width="9" height="14" viewBox="0 0 9 14"><path d="M1.5 1.5l5.5 5.5-5.5 5.5" fill="none" stroke="#fff" stroke-width="2"/></svg>
<svg style="left:305px;top:679px" width="45" height="28" viewBox="0 0 45 28"><path fill="#2a7be4" d="M4.2 0h10.8q6.5 0 5.4 6.2-1.2 6.3-7.5 6.3H9l-1.7 4.3H0z M10.6 4.6l-1 3.6h3.2q2.2 0 2.5-1.8.3-1.8-1.6-1.8z"/><path fill="#0b2a5a" d="M24 0h11.5q6 .2 5.2 4.4-.5 2.8-2.8 3.8 2.6 1 2 4.2-.8 4.5-6.6 4.4H20.2z M29.3 3.6l-.7 2.8h3.4q1.8 0 2-1.4.2-1.4-1.6-1.4z M27.8 9.6l-.8 3.5h3.7q1.9 0 2.2-1.7.3-1.8-1.6-1.8z"/><path d="M8.5 17.8q3 7 14 7.2 9.5 0 18-3.6" fill="none" stroke="#2a7be4" stroke-width="1.3"/><path fill="#2a7be4" d="M36.5 21.2l7-2.4-1.5 1.8 1.8.3-4.5 1.7z"/></svg>
<svg style="left:408.7px;top:675.5px" width="23" height="23" viewBox="0 0 22 22" fill="none" stroke="#36b56a" stroke-width="1.35"><path d="M1.8 14.6A9.6 9.6 0 0 1 16.2 3.2"/><path d="M19.8 7.5A9.6 9.6 0 0 1 5.5 18.9"/><path d="M17.2 2.1L18.6 5.1L14.8 5.8z" fill="#36b56a" stroke-width=".8" stroke-linejoin="round"/><path d="M3.1 16.7L6.6 16.2L4.2 20.2z" fill="#36b56a" stroke-width=".8" stroke-linejoin="round"/><path d="M13.4 8.6q-.4-1.4-2.5-1.4-2.3 0-2.3 1.7 0 1.5 2.4 2 2.6.5 2.6 2.3 0 1.9-2.6 1.9-2.2 0-2.7-1.7M10.85 5.6v1.6M10.85 15.1v1.6" stroke-width="1.45" stroke-linecap="round"/></svg>
<div class="c" style="left:471px;top:683px">2</div>
<div class="c" style="left:557px;top:683px">9924648</div>
<div class="c" style="left:703px;top:682px">Routine</div>
<div class="c" style="left:810px;top:683px">Nov/09/2022 5:18:...</div>
<div class="c" style="left:964px;top:685px">11/16/2022</div>
<div class="c g" style="left:1120px;top:681px">Aviation<span style="margin-left:2px">Co</span><span style="margin-left:6px">7</span></div>
<div class="c g" style="left:1276px;top:683px">Kateb A</div>
<div class="c" style="left:1432px;top:683px">rfq@aviation.co ...</div>
<div class="c" style="left:1597px;top:683px">Quote Request #99...</div>
<div class="c" style="left:1752px;top:683px">MOROCCO</div>
<div class="a" style="left:89px;top:730px;width:18px;height:18px;border:2px solid #5f5f5f;border-radius:2px"></div>
<svg style="left:150px;top:734px" width="14" height="9" viewBox="0 0 14 9"><path d="M1.5 1.5l5.5 5.5 5.5-5.5" fill="none" stroke="#555" stroke-width="1.8"/></svg>
<div class="a" style="left:186.8px;top:724.4px;width:29px;height:29px;border-radius:50%;background:#4a93c4;box-shadow:0 3px 7px rgba(0,0,0,.3)"></div>
<svg style="left:194.8px;top:734.4px" width="14" height="9" viewBox="0 0 14 9"><path d="M1.5 1.5l5.5 5.5 5.5-5.5" fill="none" stroke="#fff" stroke-width="2"/></svg>
<div class="a" style="left:225.8px;top:724.4px;width:29px;height:29px;border-radius:50%;background:#e0981f;box-shadow:0 3px 7px rgba(0,0,0,.3)"></div>
<svg style="left:236.8px;top:731.4px" width="9" height="14" viewBox="0 0 9 14"><path d="M1.5 1.5l5.5 5.5-5.5 5.5" fill="none" stroke="#fff" stroke-width="2"/></svg>
<svg style="left:306px;top:717px" width="44" height="37" viewBox="0 0 44 37"><ellipse cx="13.5" cy="5" rx="6.8" ry="4.3" fill="#3a7fd0"/><g stroke="#fff" stroke-width=".6" fill="none"><path d="M7 4h13M7.5 6.3h12M13.5 .8v8.4M10 1.3q-1.5 3.7 0 7.4M17 1.3q1.5 3.7 0 7.4"/></g><path fill="#1f7ad0" d="M5 10.5h5.2L6.5 29.5H1.3z M12.3 10.5h5.2l-3 14.5h8.2l-.9 4.5H9.4z"/><path fill="#1f7ad0" d="M27 10.5h14.2l-.9 4.3h-9.6l-.7 2.6h7.2q3.2.2 2.6 3.6l-1.3 5.6q-.8 2.9-3.6 2.9H22.7l.9-4.3h9.6l.7-2.9h-7.2q-3-.1-2.5-3.4l1-4.6q.7-3.8 2.8-3.8z"/><circle cx="42" cy="29" r=".9" fill="#1f7ad0"/><text x="21.5" y="36" text-anchor="middle" font-family="Liberation Sans" font-size="4.6" fill="#666" textLength="40" lengthAdjust="spacingAndGlyphs">A Boeing Company</text></svg>
<svg style="left:408.7px;top:724.5px" width="23" height="23" viewBox="0 0 22 22" fill="none" stroke="#36b56a" stroke-width="1.35"><path d="M1.8 14.6A9.6 9.6 0 0 1 16.2 3.2"/><path d="M19.8 7.5A9.6 9.6 0 0 1 5.5 18.9"/><path d="M17.2 2.1L18.6 5.1L14.8 5.8z" fill="#36b56a" stroke-width=".8" stroke-linejoin="round"/><path d="M3.1 16.7L6.6 16.2L4.2 20.2z" fill="#36b56a" stroke-width=".8" stroke-linejoin="round"/><path d="M13.4 8.6q-.4-1.4-2.5-1.4-2.3 0-2.3 1.7 0 1.5 2.4 2 2.6.5 2.6 2.3 0 1.9-2.6 1.9-2.2 0-2.7-1.7M10.85 5.6v1.6M10.85 15.1v1.6" stroke-width="1.45" stroke-linecap="round"/></svg>
<div class="c" style="left:471px;top:732px">5</div>
<div class="c" style="left:557px;top:732px">ILSCBVQ221109...</div>
<div class="c" style="left:701px;top:732px">Routine</div>
<div class="c" style="left:810px;top:732px">Nov/09/2022 1:38:...</div>
<div class="c" style="left:966px;top:732px">11/16/2022 00:00:...</div>
<div class="c g" style="left:1119px;top:726px">Aviation<span style="margin-left:2px">Co</span><span style="margin-left:6px">8</span></div>
<div class="c g" style="left:1276px;top:732px">Brian F</div>
<div class="c" style="left:1432px;top:732px">sales@aviation....</div>
<div class="c" style="left:1597px;top:732px">RFQ - From Capital ...</div>
<div class="c" style="left:1752px;top:732px">United States</div>
<div class="a" style="left:89px;top:777px;width:18px;height:18px;border:2px solid #5f5f5f;border-radius:2px"></div>
<svg style="left:150px;top:781px" width="14" height="9" viewBox="0 0 14 9"><path d="M1.5 1.5l5.5 5.5 5.5-5.5" fill="none" stroke="#555" stroke-width="1.8"/></svg>
<div class="a" style="left:186.8px;top:771.4px;width:29px;height:29px;border-radius:50%;background:#4a93c4;box-shadow:0 3px 7px rgba(0,0,0,.3)"></div>
<svg style="left:194.8px;top:781.4px" width="14" height="9" viewBox="0 0 14 9"><path d="M1.5 1.5l5.5 5.5 5.5-5.5" fill="none" stroke="#fff" stroke-width="2"/></svg>
<div class="a" style="left:225.8px;top:771.4px;width:29px;height:29px;border-radius:50%;background:#e0981f;box-shadow:0 3px 7px rgba(0,0,0,.3)"></div>
<svg style="left:236.8px;top:778.4px" width="9" height="14" viewBox="0 0 9 14"><path d="M1.5 1.5l5.5 5.5-5.5 5.5" fill="none" stroke="#fff" stroke-width="2"/></svg>
<div class="a" style="left:307px;top:766px;width:40px;height:35px;background:#707070;border-radius:3px;border:1.2px solid #4a4a4a"></div><div class="t" style="left:307px;top:777px;width:40px;text-align:center;font-size:14.5px;color:#fff">LOC</div>
<svg style="left:408.7px;top:771.5px" width="23" height="23" viewBox="0 0 22 22" fill="none" stroke="#36b56a" stroke-width="1.35"><path d="M1.8 14.6A9.6 9.6 0 0 1 16.2 3.2"/><path d="M19.8 7.5A9.6 9.6 0 0 1 5.5 18.9"/><path d="M17.2 2.1L18.6 5.1L14.8 5.8z" fill="#36b56a" stroke-width=".8" stroke-linejoin="round"/><path d="M3.1 16.7L6.6 16.2L4.2 20.2z" fill="#36b56a" stroke-width=".8" stroke-linejoin="round"/><path d="M13.4 8.6q-.4-1.4-2.5-1.4-2.3 0-2.3 1.7 0 1.5 2.4 2 2.6.5 2.6 2.3 0 1.9-2.6 1.9-2.2 0-2.7-1.7M10.85 5.6v1.6M10.85 15.1v1.6" stroke-width="1.45" stroke-linecap="round"/></svg>
<div class="c" style="left:471px;top:779px">2</div>
<div class="c" style="left:559px;top:779px">12149382</div>
<div class="c" style="left:702px;top:777px">Routine</div>
<div class="c" style="left:810px;top:779px">Nov/07/2022 1:01:...</div>
<div class="c" style="left:966px;top:779px">11/16/2022</div>
<div class="c g" style="left:1120px;top:778px">Aviation<span style="margin-left:2px">Co</span><span style="margin-left:6px">9</span></div>
<div class="c g" style="left:1276px;top:778px">Dejan T</div>
<div class="c" style="left:1429px;top:778px">sales@aviation....</div>
<div class="c" style="left:1597px;top:778px">RFQ | Avio chem d....</div>
<div class="c" style="left:1752px;top:778px">Serbia</div>
<div class="a" style="left:89px;top:821px;width:18px;height:18px;border:2px solid #5f5f5f;border-radius:2px"></div>
<svg style="left:150px;top:825px" width="14" height="9" viewBox="0 0 14 9"><path d="M1.5 1.5l5.5 5.5 5.5-5.5" fill="none" stroke="#555" stroke-width="1.8"/></svg>
<div class="a" style="left:186.8px;top:815.4px;width:29px;height:29px;border-radius:50%;background:#4a93c4;box-shadow:0 3px 7px rgba(0,0,0,.3)"></div>
<svg style="left:194.8px;top:825.4px" width="14" height="9" viewBox="0 0 14 9"><path d="M1.5 1.5l5.5 5.5 5.5-5.5" fill="none" stroke="#fff" stroke-width="2"/></svg>
<div class="a" style="left:225.8px;top:815.4px;width:29px;height:29px;border-radius:50%;background:#e0981f;box-shadow:0 3px 7px rgba(0,0,0,.3)"></div>
<svg style="left:236.8px;top:822.4px" width="9" height="14" viewBox="0 0 9 14"><path d="M1.5 1.5l5.5 5.5-5.5 5.5" fill="none" stroke="#fff" stroke-width="2"/></svg>
<div class="a" style="left:307px;top:810px;width:40px;height:35px;background:#707070;border-radius:3px;border:1.2px solid #4a4a4a"></div><div class="t" style="left:307px;top:821px;width:40px;text-align:center;font-size:14.5px;color:#fff">LOC</div>
<svg style="left:408.7px;top:815.5px" width="23" height="23" viewBox="0 0 22 22" fill="none" stroke="#36b56a" stroke-width="1.35"><path d="M1.8 14.6A9.6 9.6 0 0 1 16.2 3.2"/><path d="M19.8 7.5A9.6 9.6 0 0 1 5.5 18.9"/><path d="M17.2 2.1L18.6 5.1L14.8 5.8z" fill="#36b56a" stroke-width=".8" stroke-linejoin="round"/><path d="M3.1 16.7L6.6 16.2L4.2 20.2z" fill="#36b56a" stroke-width=".8" stroke-linejoin="round"/><path d="M13.4 8.6q-.4-1.4-2.5-1.4-2.3 0-2.3 1.7 0 1.5 2.4 2 2.6.5 2.6 2.3 0 1.9-2.6 1.9-2.2 0-2.7-1.7M10.85 5.6v1.6M10.85 15.1v1.6" stroke-width="1.45" stroke-linecap="round"/></svg>
<div class="c" style="left:471px;top:823px">1</div>
<div class="c" style="left:562px;top:822px">MP6488971</div>
<div class="c" style="left:702px;top:821px">Routine</div>
<div class="c" style="left:810px;top:823px">Sep/22/2022 3:12:...</div>
<div class="c" style="left:966px;top:823px">11/16/2022</div>
<div class="c g" style="left:1118px;top:822px">Aviation<span style="margin-left:2px">Co</span><span style="margin-left:6px">9</span></div>
<div class="c g" style="left:1276px;top:823px">Dejan T</div>
<div class="c" style="left:1429px;top:824px">sales@aviation....</div>
<div class="c" style="left:1597px;top:823px">[EXTERNAL] RFQ | ...</div>
<div class="c" style="left:1752px;top:823px">Serbia</div>
<div class="a" style="left:67px;top:887px;width:1822px;height:4px;background:#c4c4c4"></div>
<div class="a" style="left:70px;top:907px;width:33px;height:33px;border-radius:50%;background:#e0981f"></div>
<div class="t" style="left:70px;top:916px;width:33px;text-align:center;font-size:15px;color:#fff">10</div>
<div class="t" style="left:101px;top:916px;width:50px;text-align:center;font-size:15px;color:#222">25</div>
<div class="t" style="left:140px;top:916px;width:50px;text-align:center;font-size:15px;color:#222">50</div>
<div class="t" style="left:182px;top:916px;width:50px;text-align:center;font-size:15px;color:#222">100</div>
<svg style="left:1675px;top:917px" width="9" height="13" viewBox="0 0 9 13"><path d="M7 1.5L2 6.5l5 5" fill="none" stroke="#222" stroke-width="1.8"/></svg>
<div class="a" style="left:1781px;top:907px;width:33px;height:33px;border-radius:50%;background:#e0981f"></div>
<div class="t" style="left:1703px;top:916px;width:30px;text-align:center;font-size:15px;color:#222">1</div>
<div class="t" style="left:1743px;top:916px;width:30px;text-align:center;font-size:15px;color:#222">2</div>
<div class="t" style="left:1782px;top:916px;width:30px;text-align:center;font-size:15px;color:#fff">3</div>
<div class="t" style="left:1822px;top:916px;width:30px;text-align:center;font-size:15px;color:#222">4</div>
<div class="t" style="left:1861px;top:916px;width:30px;text-align:center;font-size:15px;color:#222">5</div>
<div class="t" style="left:1900px;top:916px;width:30px;text-align:center;font-size:15px;color:#222">6</div>
</body></html>
